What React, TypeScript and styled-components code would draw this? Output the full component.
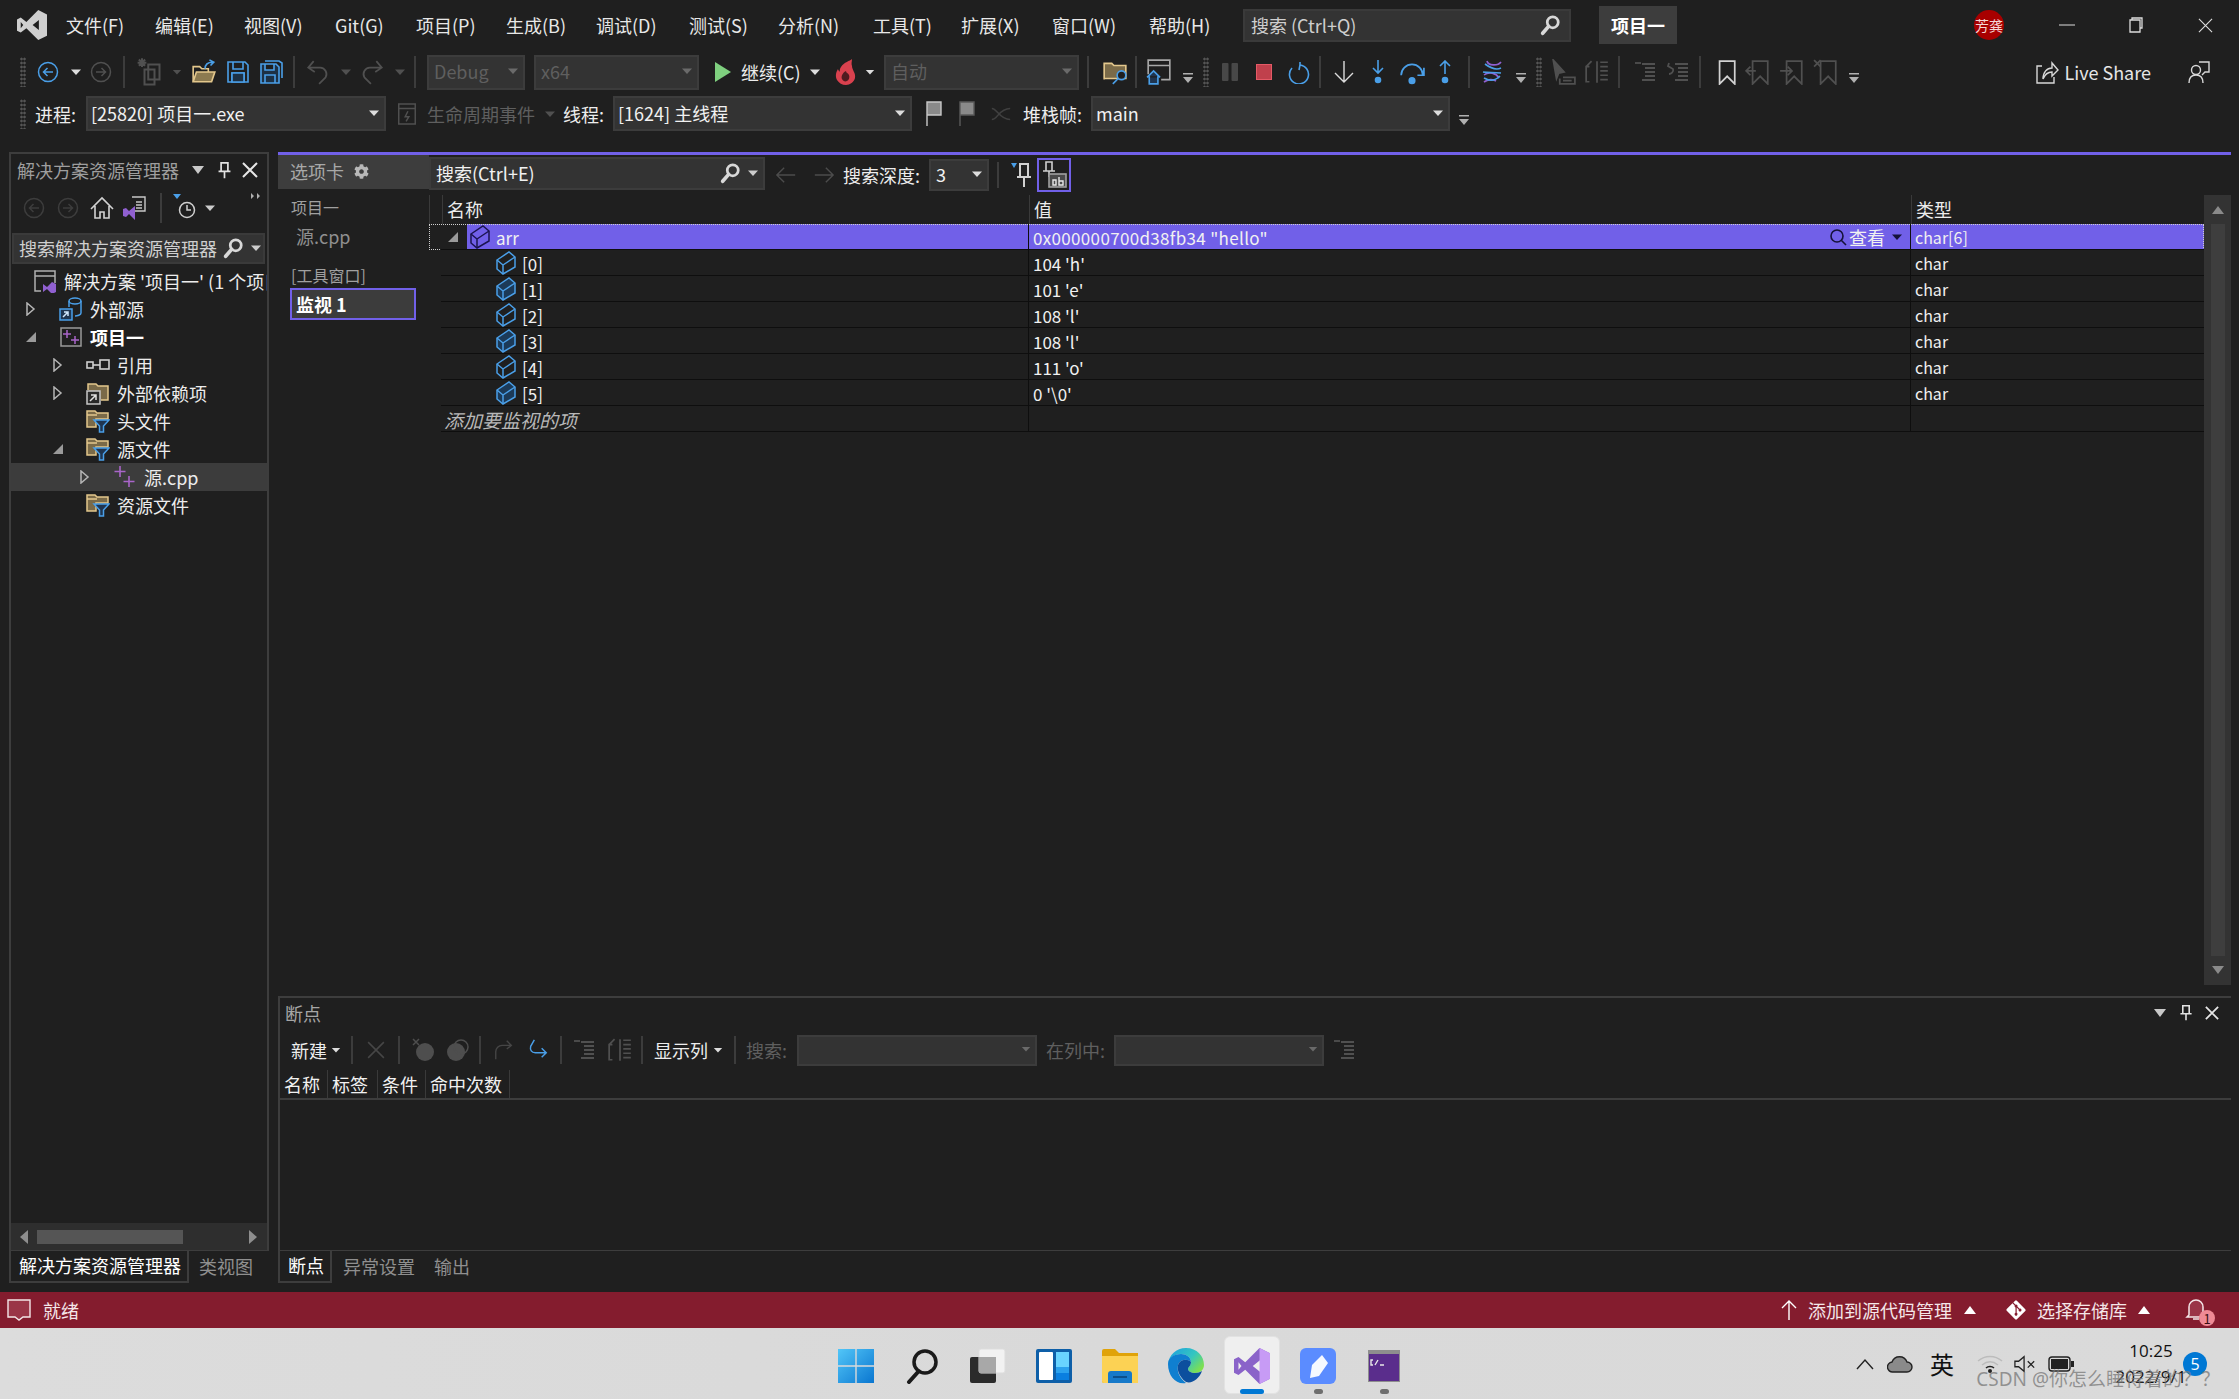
import React from "react";
import styled, { createGlobalStyle } from "styled-components";
import { FaCog, FaGitAlt } from "react-icons/fa";

const BLUE = "#4a9fe8";
const GRAY = "#505050";
const WHITE = "#dcdcdc";
const TAN = "#e3c78c";
const PURPLE = "#7160e8";

const Global = createGlobalStyle`
  html, body { margin: 0; padding: 0; background: #1f1f1f; }
  * { box-sizing: border-box; }
  body { font-family: "Noto Sans CJK SC", "Noto Sans", sans-serif; font-size: 18px; line-height: 1; color: #f1f1f1; }
`;

const Page = styled.div`
  width: 2239px;
  height: 1399px;
  overflow: hidden;
  display: flex;
  flex-direction: column;
  background: #1f1f1f;
`;

/* title bar */
const TitleBar = styled.div`
  height: 50px;
  display: flex;
  align-items: center;
  padding: 0 0 0 17px;
  flex: none;
`;
const MenuRow = styled.div`
  display: flex;
  margin-left: 19px;
`;
const MenuItem = styled.span<{ $w: number }>`
  width: ${(p) => p.$w}px;
  font-size: 18px;
  white-space: nowrap;
  color: #e8e8e8;
`;
const TitleSearch = styled.div`
  width: 328px;
  height: 33px;
  margin-left: 17px;
  background: #333333;
  border: 2px solid #3a3a3a;
  display: flex;
  align-items: center;
  justify-content: space-between;
  padding: 0 8px 0 6px;
  color: #cfcfcf;
`;
const ProjectName = styled.div`
  width: 78px;
  height: 38px;
  margin-left: 28px;
  background: #3d3d3d;
  font-weight: 700;
  color: #fff;
  display: flex;
  align-items: center;
  justify-content: center;
`;
const Avatar = styled.div`
  width: 30px;
  height: 30px;
  margin-left: 297px;
  margin-right: 31px;
  border-radius: 50%;
  background: #a80000;
  color: #f5d5d5;
  font-size: 14px;
  display: flex;
  align-items: center;
  justify-content: center;
  white-space: nowrap;
`;
const WinBtn = styled.div<{ $w: number }>`
  width: ${(p) => p.$w}px;
  display: flex;
  justify-content: center;
  align-items: center;
`;

/* toolbars */
const Toolbar = styled.div<{ $h: number; $pl?: number }>`
  height: ${(p) => p.$h}px;
  display: flex;
  align-items: center;
  padding-left: ${(p) => p.$pl ?? 16}px;
  flex: none;
`;
const BreakTools = styled(Toolbar)`
  margin-bottom: 2px;
`;
const Cell = styled.div<{ $w: number; $c?: string; $pl?: number }>`
  width: ${(p) => p.$w}px;
  height: 100%;
  flex: none;
  padding-left: ${(p) => p.$pl ?? 0}px;
  display: flex;
  align-items: center;
  justify-content: center;
  white-space: nowrap;
  color: ${(p) => p.$c ?? "#ededed"};
`;
const Sep = styled.div<{ $h?: number }>`
  width: 2px;
  height: ${(p) => p.$h ?? 32}px;
  background: #3c3c3c;
`;
const Gripper = styled.div`
  width: 6px;
  height: 30px;
  background-image: radial-gradient(#555 1px, transparent 1.2px);
  background-size: 3px 4px;
`;
const Combo = styled.div<{ $w: number; $h?: number; $dim?: boolean; $ml?: number; $pl?: number }>`
  width: ${(p) => p.$w}px;
  height: ${(p) => p.$h ?? 35}px;
  margin-left: ${(p) => p.$ml ?? 0}px;
  flex: none;
  background: #333333;
  border: 2px solid #3c3c3c;
  display: flex;
  align-items: center;
  justify-content: space-between;
  padding: 0 4px 2px ${(p) => p.$pl ?? 5}px;
  color: ${(p) => (p.$dim ? "#5f5f5f" : "#f1f1f1")};
  white-space: nowrap;
`;
const WatchSearch = styled(Combo)`
  margin-top: -3px;
`;
const SearchEnd = styled.div`
  display: flex;
  align-items: center;
  gap: 6px;
`;
const Label = styled.span<{ $w: number; $dim?: boolean; $ml?: number }>`
  width: ${(p) => p.$w}px;
  margin-left: ${(p) => p.$ml ?? 0}px;
  flex: none;
  white-space: nowrap;
  color: ${(p) => (p.$dim ? "#5f5f5f" : "#ededed")};
`;
const LiveShare = styled.div`
  margin-left: auto;
  display: flex;
  align-items: center;
  gap: 5px;
  color: #e6e6e6;
  padding-right: 28px;
`;
const LiveText = styled.span`
  font-size: 18px;
  margin-right: 31px;
`;
const OverflowMark = styled.svg`
  margin-top: 12px;
`;

/* workspace */
const Workspace = styled.div`
  flex: 1;
  min-height: 0;
  display: flex;
  gap: 9px;
  padding: 19px 8px 9px 9px;
`;
const LeftColumn = styled.div`
  width: 260px;
  flex: none;
  display: flex;
  flex-direction: column;
`;
const ToolPanel = styled.div`
  flex: 1;
  min-height: 0;
  border: 2px solid #3d3d3d;
  border-bottom-width: 1px;
  display: flex;
  flex-direction: column;
`;
const PanelTitle = styled.div`
  height: 32px;
  flex: none;
  display: flex;
  align-items: center;
  padding-left: 6px;
  color: #9e9e9e;
`;
const PanelTitleText = styled.span`
  width: 170px;
  white-space: nowrap;
`;
const PanelTool = styled.div`
  height: 44px;
  margin-bottom: 3px;
  flex: none;
  display: flex;
  align-items: center;
  padding-left: 6px;
`;
const MoreMark = styled.svg`
  margin-left: auto;
  margin-right: 6px;
  align-self: flex-start;
  margin-top: 6px;
`;
const PanelSearch = styled.div`
  height: 31px;
  flex: none;
  margin: 0 2px 0 1px;
  background: #333333;
  border: 2px solid #3a3a3a;
  display: flex;
  align-items: center;
  padding: 0 0 2px 5px;
  color: #cfcfcf;
  white-space: nowrap;
`;
const SearchHint = styled.span`
  width: 203px;
`;
const SearchDrop = styled.span`
  margin-left: 6px;
  display: flex;
`;
const Tree = styled.div`
  margin-top: 3px;
  flex: 1;
  min-height: 0;
  overflow: hidden;
`;
const TreeRow = styled.div<{ $pad: number; $sel?: boolean }>`
  height: 28px;
  display: flex;
  align-items: center;
  padding-left: ${(p) => p.$pad}px;
  background: ${(p) => (p.$sel ? "#3c3c3c" : "transparent")};
  white-space: nowrap;
  overflow: hidden;
`;
const Expander = styled.div`
  width: 22px;
  flex: none;
  display: flex;
  justify-content: center;
`;
const TreeIcon = styled.div`
  width: 28px;
  flex: none;
  margin-left: 15px;
  margin-right: 5px;
  display: flex;
  justify-content: center;
`;
const TreeText = styled.span<{ $bold?: boolean }>`
  font-weight: ${(p) => (p.$bold ? 700 : 400)};
  color: ${(p) => (p.$bold ? "#fff" : "#ececec")};
`;
const HScroll = styled.div`
  height: 27px;
  flex: none;
  background: #2e2e2e;
  display: flex;
  align-items: center;
  padding: 0 10px 0 9px;
  justify-content: space-between;
`;
const HThumb = styled.div`
  width: 146px;
  height: 14px;
  background: #555;
  margin-left: 9px;
  margin-right: auto;
`;
const TabStrip = styled.div`
  height: 32px;
  flex: none;
  display: flex;
`;
const BottomTab = styled.div<{ $w: number; $on?: boolean; $pl?: number }>`
  width: ${(p) => p.$w}px;
  flex: none;
  padding-left: ${(p) => p.$pl ?? 10}px;
  padding-bottom: 3px;
  display: flex;
  align-items: center;
  white-space: nowrap;
  color: ${(p) => (p.$on ? "#fff" : "#8f8f8f")};
  border: ${(p) => (p.$on ? "2px solid #3d3d3d" : "none")};
  border-top: none;
`;

const RightColumn = styled.div`
  flex: 1;
  min-width: 0;
  display: flex;
  flex-direction: column;
`;
const DocArea = styled.div`
  height: 833px;
  flex: none;
  border-top: 3px solid ${PURPLE};
  display: flex;
  margin-bottom: 11px;
`;
const TabWell = styled.div`
  width: 151px;
  flex: none;
  display: flex;
  flex-direction: column;
`;
const WellHeader = styled.div`
  height: 34px;
  background: #3d3d3d;
  display: flex;
  align-items: center;
  gap: 10px;
  padding: 0 0 2px 12px;
  color: #a8a8a8;
`;
const WellGroup = styled.div<{ $mt: number }>`
  margin: ${(p) => p.$mt}px 0 0 13px;
  font-size: 16px;
  color: #a0a0a0;
`;
const WellFile = styled.div`
  margin: 12px 0 0 18px;
  color: #8f8f8f;
  font-size: 18px;
`;
const WellActive = styled.div`
  width: 126px;
  height: 32px;
  margin: 5px 0 0 12px;
  border: 2px solid ${PURPLE};
  background: #3c3c3c;
  font-weight: 700;
  color: #fff;
  display: flex;
  align-items: center;
  padding-left: 4px;
`;
const WatchPane = styled.div`
  flex: 1;
  min-width: 0;
  display: flex;
  flex-direction: column;
`;
const WatchBody = styled.div`
  flex: 1;
  min-height: 0;
  display: flex;
`;
const Grid = styled.div`
  flex: 1;
  min-width: 0;
`;
const Head = styled.div`
  height: 29px;
  display: grid;
  grid-template-columns: 12px 587px 882px 1fr;
  border-left: 1px solid #3a3a3a;
`;
const HeadCell = styled.div`
  border-left: 1px solid #3a3a3a;
  padding: 0 0 2px 4px;
  display: flex;
  align-items: center;
  color: #ececec;
`;
const Row = styled.div<{ $sel?: boolean }>`
  height: 26px;
  display: grid;
  grid-template-columns: 38px 561px 882px 1fr;
  position: relative;
  outline: ${(p) => (p.$sel ? "1px dotted #cfcfcf" : "none")};
  outline-offset: -1px;
  &::after {
    content: "";
    position: absolute;
    left: 12px;
    right: 0;
    bottom: 0;
    height: 1px;
    background: #0e0e0e;
  }
`;
const Gutter = styled.div`
  display: flex;
  align-items: center;
  justify-content: center;
  padding-left: 10px;
`;
const NameCell = styled.div<{ $sel?: boolean; $depth: number }>`
  padding-left: ${(p) => p.$depth * 26 + 3}px;
  display: flex;
  align-items: center;
  gap: 6px;
  background: ${(p) => (p.$sel ? PURPLE : "transparent")};
  font-size: 17px;
`;
const ValueCell = styled.div<{ $sel?: boolean }>`
  border-left: 1px solid #0e0e0e;
  padding: 0 4px;
  display: flex;
  align-items: center;
  justify-content: space-between;
  background: ${(p) => (p.$sel ? PURPLE : "transparent")};
  font-size: 17px;
  white-space: pre;
`;
const TypeCell = styled(ValueCell)`
  font-size: 16px;
`;
const HexText = styled.span`
  letter-spacing: 0.33px;
`;
const AddText = styled.span`
  position: relative;
  left: -26px;
  font-style: italic;
  color: #b8b8b8;
  font-size: 19px;
`;
const ViewBtn = styled.span`
  display: flex;
  align-items: center;
  gap: 2px;
  font-size: 18px;
  margin-right: -1px;
`;
const VScroll = styled.div`
  width: 27px;
  flex: none;
  background: #333333;
  display: flex;
  flex-direction: column;
  align-items: center;
  padding: 10px 0;
  gap: 9px;
`;
const VThumb = styled.div`
  flex: 1;
  width: 14px;
  background: #3e3e3e;
`;
const BreakPanel = styled.div`
  flex: 1;
  min-height: 0;
  border: 2px solid #3d3d3d;
  border-bottom-width: 1px;
  border-right: none;
  display: flex;
  flex-direction: column;
`;
const BreakTitle = styled.div`
  height: 34px;
  flex: none;
  display: flex;
  align-items: center;
  justify-content: space-between;
  padding: 0 12px 4px 5px;
  color: #a6a6a6;
`;
const BreakButtons = styled.div`
  display: flex;
  align-items: center;
  gap: 11px;
`;
const BreakHead = styled.div`
  height: 30px;
  flex: none;
  display: flex;
  border-bottom: 2px solid #3d3d3d;
`;
const BreakCol = styled.div<{ $w: number }>`
  width: ${(p) => p.$w}px;
  padding-left: 4px;
  display: flex;
  align-items: center;
  border-right: 1px solid #3a3a3a;
  white-space: nowrap;
  color: #f1f1f1;
`;

/* status bar and taskbar */
const StatusBar = styled.div`
  height: 36px;
  flex: none;
  background: #841c2e;
  display: flex;
  align-items: center;
  padding-left: 7px;
  color: #f4e6e8;
`;
const StatusRight = styled.div`
  margin-left: auto;
  display: flex;
  align-items: center;
  padding-right: 29px;
`;
const StatusItem = styled.div<{ $gap: number; $mr: number }>`
  display: flex;
  align-items: center;
  gap: ${(p) => p.$gap}px;
  margin-right: ${(p) => p.$mr}px;
`;
const StatusLabel = styled.span`
  margin-left: 12px;
`;
const BellBox = styled.div`
  position: relative;
  width: 26px;
  height: 26px;
`;
const BellBadge = styled.span`
  position: absolute;
  right: -5px;
  bottom: -3px;
  width: 16px;
  height: 16px;
  border-radius: 50%;
  background: #ef8a95;
  color: #3a1016;
  font-size: 13px;
  display: flex;
  align-items: center;
  justify-content: center;
`;
const Taskbar = styled.div`
  height: 71px;
  flex: none;
  background: linear-gradient(90deg, #dcdcdc, #d9d9d9 50%, #dadada);
  display: grid;
  grid-template-columns: 1fr auto 1fr;
  position: relative;
  color: #111;
`;
const TaskIcons = styled.div`
  grid-column: 2;
  display: flex;
`;
const TaskCell = styled.div<{ $on?: boolean }>`
  position: relative;
  width: 66px;
  padding-top: 5px;
  display: flex;
  align-items: center;
  justify-content: center;
  &::before {
    content: "";
    display: ${(p) => (p.$on ? "block" : "none")};
    position: absolute;
    left: 5px;
    right: 5px;
    top: 8px;
    bottom: 5px;
    background: #efefef;
    border: 1px solid #e2e2e2;
    border-radius: 6px;
  }
  & > svg { position: relative; }
`;
const RunDot = styled.span<{ $active?: boolean }>`
  position: absolute;
  left: 50%;
  bottom: 5px;
  width: ${(p) => (p.$active ? 24 : 9)}px;
  height: 5px;
  margin-left: ${(p) => (p.$active ? -12 : -4)}px;
  border-radius: 3px;
  background: ${(p) => (p.$active ? "#0078d4" : "#6e6e6e")};
`;
const Tray = styled.div`
  grid-column: 3;
  display: flex;
  align-items: center;
  justify-content: flex-end;
  padding-right: 32px;
`;
const TrayCell = styled.div<{ $w: number }>`
  width: ${(p) => p.$w}px;
  display: flex;
  justify-content: center;
  font-size: 24px;
`;
const Clock = styled.div`
  width: 64px;
  display: flex;
  flex-direction: column;
  align-items: center;
  gap: 9px;
  font-family: "Open Sans", sans-serif;
  font-size: 17px;
  white-space: nowrap;
  margin-left: 33px;
`;
const Badge = styled.div`
  width: 24px;
  height: 24px;
  border-radius: 50%;
  background: #0078d4;
  color: #fff;
  font-size: 16px;
  display: flex;
  align-items: center;
  justify-content: center;
  font-family: "Open Sans", sans-serif;
`;
const Watermark = styled.div`
  position: absolute;
  right: 19px;
  top: 42px;
  font-size: 19px;
  font-family: "Noto Sans", "Noto Sans CJK SC", sans-serif;
  color: rgba(120, 120, 120, 0.75);
  white-space: nowrap;
`;

/* drawings */
type IcProps = { s?: number; c?: string; children?: React.ReactNode; w?: number };
const Ic = ({ s = 24, c = GRAY, w = 1.6, children }: IcProps) => (
  <svg width={s} height={s} viewBox="0 0 24 24" fill="none" stroke={c} strokeWidth={w}>
    {children}
  </svg>
);
const Caret = ({ c = "#bdbdbd", s = 12 }: { c?: string; s?: number }) => (
  <svg width={s} height={s} viewBox="0 0 12 12">
    <path d="M1 3.500h10L6 9z" fill={c} />
  </svg>
);
const Overflow = () => (
  <OverflowMark width="12" height="14" viewBox="0 0 12 14">
    <path d="M1 2h10v1.600H1zM1 6h10L6 12z" fill="#b0b0b0" />
  </OverflowMark>
);
const Magnifier = ({ s = 22, c = "#d8d8d8" }: { s?: number; c?: string }) => (
  <svg width={s} height={s} viewBox="0 0 24 24" fill="none" stroke={c}>
    <circle cx="15" cy="9" r="6" strokeWidth="3" />
    <path d="M10.500 13.500L4 21" strokeWidth="4" strokeLinecap="round" />
  </svg>
);
const VsMark = ({ s = 24, c, c2 }: { s?: number; c: string; c2?: string }) => (
  <svg width={s} height={s} viewBox="0 0 24 24">
    <path
      fillRule="evenodd"
      fill={c}
      d="M17 0L7.500 9.500 3 6 0 7.500v9L3 18l4.500-3.500L17 24l7-3.500v-17zM17.500 8v8L12.500 12zM3 9.500L5 12l-2 2.500z"
    />
    {c2 && <path fill={c2} d="M17 0l7 3.500v17L17 24z" />}
  </svg>
);
const CircleArrow = ({ c, flip }: { c: string; flip?: boolean }) => (
  <Ic c={c} w={1.5}>
    <circle cx="12" cy="12" r="9.500" />
    <path d={flip ? "M7 12h9M12.500 8l4 4-4 4" : "M17 12H8M11.500 8l-4 4 4 4"} />
  </Ic>
);
const NewProject = () => (
  <Ic c={GRAY} s={30}>
    <path d="M4 1v7M.5 4.500h7M1.500 2l5 5M6.500 2l-5 5" />
    <path d="M9 6h9v12H9zM6 10h8v12H6z" />
  </Ic>
);
const OpenFolder = () => (
  <svg width="26" height="26" viewBox="0 0 24 24" fill="none" strokeWidth="1.5">
    <path d="M2 21V7h6l2 2h6v3" stroke={TAN} />
    <path d="M2 21l3-9h17l-3 9z" stroke={TAN} fill="#8c7a50" />
    <path d="M13 9c0-4 3-6 7-6M17 .8L21 3l-3 3" stroke={BLUE} />
  </svg>
);
const Save = () => (
  <Ic c={BLUE} s={24}>
    <path d="M2 2h17l3 3v17H2zM7 2v7h10V2M6 22v-9h12v9" />
    <path d="M6 13h12v9H6z" fill="#1d3145" />
  </Ic>
);
const SaveAll = () => (
  <Ic c={BLUE} s={24}>
    <path d="M6 1h14l3 2v15" />
    <path d="M2 4h15l3 3v16H2zM6 4v6h9V4M6 23v-8h10v8" fill="#1d3145" />
  </Ic>
);
const Undo = ({ flip }: { flip?: boolean }) => (
  <Ic c={GRAY} s={26}>
    <path
      d={
        flip
          ? "M16 2l5 6-6 4M21 8H10a6 6 0 0 0-5 9l6 6"
          : "M8 2L3 8l6 4M3 8h11a6 6 0 0 1 5 9l-6 6"
      }
    />
  </Ic>
);
const Play = () => (
  <svg width="18" height="20" viewBox="0 0 18 20">
    <path d="M1 0l16 10L1 20z" fill="#7fd07f" />
  </svg>
);
const Fire = () => (
  <svg width="22" height="26" viewBox="0 0 22 26">
    <path
      d="M17 0c-2 2-8 3-11 8C4 11 5 13 5 13c-1-1-2-2-2-3-2 3-3 7-1 11 2 3 5 5 9 5s8-3 9-7c1-5-3-8-3-12-1-2 0-5 0-7z"
      fill="#d9414e"
    />
    <path d="M11 12c-4 2-5 6-4 8s3 3 5 2 3-4 2-6-3-2-3-4z" fill="#4f1b20" />
  </svg>
);
const FolderSearch = () => (
  <svg width="26" height="26" viewBox="0 0 24 24" fill="none" strokeWidth="1.5">
    <path d="M2 19V4h7l2 2h11v12H2z" stroke={TAN} fill="#7a6a48" />
    <circle cx="18" cy="15" r="4" stroke={BLUE} fill="#1f1f1f" />
    <path d="M15 18l-5 5" stroke={BLUE} />
  </svg>
);
const WindowHome = () => (
  <svg width="26" height="26" viewBox="0 0 24 24" fill="none" strokeWidth="1.5">
    <path d="M2 14V1h20v18h-8M2 6h20" stroke="#a8a8a8" />
    <path d="M1 17l6-6 6 6M3 16v7h8v-7" stroke={BLUE} fill="#1f3550" />
  </svg>
);
const Pause = () => (
  <svg width="18" height="18" viewBox="0 0 18 18">
    <rect x="1" width="6.500" height="18" rx="1" fill="#484848" />
    <rect x="10.500" width="6.500" height="18" rx="1" fill="#484848" />
  </svg>
);
const Stop = () => (
  <svg width="16" height="16" viewBox="0 0 16 16">
    <rect x=".5" y=".5" width="15" height="15" fill="#c0404c" stroke="#e45a66" />
  </svg>
);
const Restart = () => (
  <Ic c={BLUE} s={24}>
    <path d="M14 3a9.500 9.500 0 1 1-8 3M14 3V0M14 3l-1 5" transform="translate(0 2)" />
  </Ic>
);
const StepDown = () => (
  <Ic c={WHITE} s={24} w={1.4}>
    <path d="M12 1v21M3 13l9 9 9-9" />
  </Ic>
);
const StepInto = () => (
  <Ic c={BLUE} s={24}>
    <path d="M12 0v13M7 8l5 5 5-5" />
    <circle cx="12" cy="20" r="2.500" fill={BLUE} />
  </Ic>
);
const StepOver = () => (
  <Ic c={BLUE} s={26}>
    <path d="M2 15a10 10 0 0 1 20 0M23 8v7h-6" />
    <circle cx="12" cy="20" r="2.500" fill={BLUE} />
  </Ic>
);
const StepOut = () => (
  <Ic c={BLUE} s={24}>
    <path d="M12 14V1M7 6l5-5 5 5" />
    <circle cx="12" cy="20" r="2.500" fill={BLUE} />
  </Ic>
);
const Threads = () => (
  <svg width="24" height="24" viewBox="0 0 24 24" fill="none" strokeWidth="1.6">
    <path d="M7 1c1 5 11 5 14 1M4 15c5-4 12-2 15 3M4 22c4-3 9-3 12-1" stroke="#9060d0" />
    <path d="M21 8C15 11 9 7 5 4M3 12c5 1 11 0 18 1M4 18c5 3 11 3 16-2" stroke={BLUE} />
  </svg>
);
const CursorBox = () => (
  <Ic c={GRAY} s={26}>
    <path d="M3 1l10 11-5 1-2 5z" fill={GRAY} />
    <path d="M9 18v5h14v-6H12M12 20h8" />
  </Ic>
);
const Columns = () => (
  <Ic c={GRAY} s={26}>
    <path d="M5 7H2v14h3M2 7l5-5M12 2v20M15 3h7M15 7h7M15 11h7M15 15h7M15 19h7" />
  </Ic>
);
const Lines = ({ back }: { back?: boolean }) => (
  <Ic c={GRAY} s={24} w={1.8}>
    <path d="M9 4h13M12 8h10M12 12h10M12 16h10M9 20h13" />
    {back ? <path d="M3 3l-1 3 5 3c1 3-2 5-4 5" /> : <path d="M2 3h6" />}
  </Ic>
);
const Mark = ({ c = GRAY, kind }: { c?: string; kind?: "prev" | "next" | "del" }) => (
  <Ic c={c} s={26}>
    <path d="M7 2h14v21l-7-7-7 7z" />
    {kind === "prev" && <path d="M10 11H1M5 7l-4 4 4 4" />}
    {kind === "next" && <path d="M1 11h10M8 7l4 4-4 4" />}
    {kind === "del" && <path d="M1 1l6 6M7 1L1 7" />}
  </Ic>
);
const Share = () => (
  <Ic c="#d8d8d8" s={24} w={1.4}>
    <path d="M7 6H2v17h17v-6" />
    <path d="M8 19c0-7 4-11 9-11V3l6 7-6 6v-4c-4 0-7 2-9 7z" />
  </Ic>
);
const Person = () => (
  <Ic c="#d8d8d8" s={24} w={1.4}>
    <circle cx="9" cy="10" r="4.500" />
    <path d="M2 23c0-6 3-8 7-8s7 2 7 8M12 2h10v10h-4l-3 3" />
  </Ic>
);
const Flag = ({ c = "#c8c8c8" }: { c?: string }) => (
  <svg width="20" height="26" viewBox="0 0 20 26" fill="none" stroke={c} strokeWidth="1.4">
    <path d="M3 25V1h14v13H3" fill="#8a8a8a" />
  </svg>
);
const TreeArrow = ({ open }: { open?: boolean }) =>
  open ? (
    <svg width="12" height="12" viewBox="0 0 12 12">
      <path d="M11 1v10H1z" fill="#9a9a9a" />
    </svg>
  ) : (
    <svg width="10" height="14" viewBox="0 0 10 14" fill="none" stroke="#b6b6b6" strokeWidth="1.5">
      <path d="M1 1l7 6-7 6z" />
    </svg>
  );
const FilterFolder = () => (
  <svg width="24" height="24" viewBox="0 0 24 24" fill="none" strokeWidth="1.5">
    <path d="M1 18V2h8l2 2h11v6H10v8z" fill="#7a6a48" stroke={TAN} />
    <path d="M1 6h10" stroke={TAN} />
    <path d="M8 11h15l-5.500 6v6h-4v-6z" stroke={BLUE} fill="#1f3550" />
  </svg>
);
const CppPlus = ({ s = 24 }: { s?: number }) => (
  <svg width={s} height={s} viewBox="0 0 24 24" stroke="#a965c9" strokeWidth="1.6">
    <path d="M7 1v11M1.500 6.500h11M16 11v11M10.500 16.500h11" />
  </svg>
);
const Cube = ({ c = BLUE, fill = "#1c3a58", even }: { c?: string; fill?: string; even?: boolean }) => (
  <svg width="20" height="24" viewBox="0 0 20 24" fill="none" stroke={c} strokeWidth="1.5">
    <path d="M1 9L13 1l6 5v10L7 23l-6-5z" fill={even ? fill : "none"} />
    <path d="M1 9l6 5v9M7 14l12-8" />
  </svg>
);
const Tri = ({ up, c = "#8a8a8a" }: { up?: boolean; c?: string }) => (
  <svg width="14" height="10" viewBox="0 0 14 10">
    <path d={up ? "M7 1l6 8H1z" : "M1 1h12L7 9z"} fill={c} />
  </svg>
);
const SideTri = ({ left }: { left?: boolean }) => (
  <svg width="8" height="14" viewBox="0 0 8 14">
    <path d={left ? "M8 0v14L0 7z" : "M0 0v14l8-7z"} fill="#8e8e8e" />
  </svg>
);
const Pin = ({ c = "#e2e2e2", s = 20 }: { c?: string; s?: number }) => (
  <svg width={s} height={s} viewBox="0 0 20 20" fill="none" stroke={c} strokeWidth="2">
    <path d="M6 1h8v10H6zM3 11h14M10 11v8" />
  </svg>
);
const Cross = ({ s = 16, c = "#e6e6e6", w = 2 }: { s?: number; c?: string; w?: number }) => (
  <svg width={s} height={s} viewBox="0 0 16 16" stroke={c} strokeWidth={w}>
    <path d="M1 1l14 14M15 1L1 15" />
  </svg>
);

function MenuBar() {
  const items: [string, number][] = [
    ["文件(F)", 89], ["编辑(E)", 89], ["视图(V)", 91], ["Git(G)", 81], ["项目(P)", 90],
    ["生成(B)", 90], ["调试(D)", 93], ["测试(S)", 89], ["分析(N)", 95], ["工具(T)", 88],
    ["扩展(X)", 91], ["窗口(W)", 97], ["帮助(H)", 77],
  ];
  return (
    <TitleBar>
      <VsMark s={30} c="#cfcfcf" />
      <MenuRow>
        {items.map(([t, w]) => (
          <MenuItem key={t} $w={w}>{t}</MenuItem>
        ))}
      </MenuRow>
      <TitleSearch>
        搜索 (Ctrl+Q)
        <Magnifier />
      </TitleSearch>
      <ProjectName>项目一</ProjectName>
      <Avatar>芳龚</Avatar>
      <WinBtn $w={63}>
        <svg width="16" height="2"><path d="M0 1h16" stroke="#ddd" /></svg>
      </WinBtn>
      <WinBtn $w={76}>
        <svg width="16" height="16" viewBox="0 0 16 16" fill="none" stroke="#ddd" strokeWidth="1.3">
          <path d="M4 3V1h10v10h-2M2 3h10v12H2z" />
        </svg>
      </WinBtn>
      <WinBtn $w={62}>
        <Cross s={15} c="#ddd" w={1.2} />
      </WinBtn>
    </TitleBar>
  );
}

function MainToolbar() {
  return (
    <Toolbar $h={44}>
      <Cell $w={14}><Gripper /></Cell>
      <Cell $w={36}><CircleArrow c={BLUE} /></Cell>
      <Cell $w={20}><Caret c="#ddd" /></Cell>
      <Cell $w={30}><CircleArrow c={GRAY} flip /></Cell>
      <Cell $w={16}><Sep /></Cell>
      <Cell $w={40}><NewProject /></Cell>
      <Cell $w={10}><Caret c={GRAY} /></Cell>
      <Cell $w={44}><OpenFolder /></Cell>
      <Cell $w={24}><Save /></Cell>
      <Cell $w={42}><SaveAll /></Cell>
      <Cell $w={4}><Sep /></Cell>
      <Cell $w={44}><Undo /></Cell>
      <Cell $w={12}><Caret c={GRAY} /></Cell>
      <Cell $w={40}><Undo flip /></Cell>
      <Cell $w={16}><Caret c={GRAY} /></Cell>
      <Cell $w={14}><Sep /></Cell>
      <Combo $w={98} $dim $ml={5}>Debug<Caret c="#6a6a6a" /></Combo>
      <Combo $w={165} $dim $ml={9}>x64<Caret c="#6a6a6a" /></Combo>
      <Cell $w={42} $pl={6}><Play /></Cell>
      <Label $w={62}>继续(C)</Label>
      <Cell $w={24}><Caret c="#ddd" /></Cell>
      <Cell $w={38}><Fire /></Cell>
      <Cell $w={10}><Caret c="#ddd" /></Cell>
      <Combo $w={195} $dim $ml={9}>自动<Caret c="#6a6a6a" /></Combo>
      <Cell $w={18}><Sep /></Cell>
      <Cell $w={36}><FolderSearch /></Cell>
      <Cell $w={6}><Sep /></Cell>
      <Cell $w={40}><WindowHome /></Cell>
      <Cell $w={18}><Overflow /></Cell>
      <Cell $w={18}><Gripper /></Cell>
      <Cell $w={30}><Pause /></Cell>
      <Cell $w={38}><Stop /></Cell>
      <Cell $w={30}><Restart /></Cell>
      <Cell $w={14}><Sep /></Cell>
      <Cell $w={34}><StepDown /></Cell>
      <Cell $w={34}><StepInto /></Cell>
      <Cell $w={34}><StepOver /></Cell>
      <Cell $w={32}><StepOut /></Cell>
      <Cell $w={16}><Sep /></Cell>
      <Cell $w={30}><Threads /></Cell>
      <Cell $w={28}><Overflow /></Cell>
      <Cell $w={8}><Gripper /></Cell>
      <Cell $w={40}><CursorBox /></Cell>
      <Cell $w={28}><Columns /></Cell>
      <Cell $w={16}><Sep /></Cell>
      <Cell $w={36}><Lines /></Cell>
      <Cell $w={30}><Lines back /></Cell>
      <Cell $w={14}><Sep /></Cell>
      <Cell $w={36}><Mark c="#d2d2d2" /></Cell>
      <Cell $w={30}><Mark kind="prev" /></Cell>
      <Cell $w={38}><Mark kind="next" /></Cell>
      <Cell $w={30}><Mark kind="del" /></Cell>
      <Cell $w={26}><Overflow /></Cell>
      <LiveShare>
        <Share />
        <LiveText>Live Share</LiveText>
        <Person />
      </LiveShare>
    </Toolbar>
  );
}

function DebugToolbar() {
  return (
    <Toolbar $h={39}>
      <Cell $w={14}><Gripper /></Cell>
      <Label $w={51} $ml={5}>进程:</Label>
      <Combo $w={300} $pl={3}>[25820] 项目一.exe<Caret c="#ddd" /></Combo>
      <Cell $w={41} $c={GRAY}>
        <Ic c={GRAY} s={22}>
          <path d="M3 1h18v22H3zM3 6h18M13 9l-3 6h4l-3 5" />
        </Ic>
      </Cell>
      <Label $w={109} $dim>生命周期事件</Label>
      <Cell $w={27}><Caret c={GRAY} /></Cell>
      <Label $w={50}>线程:</Label>
      <Combo $w={299} $pl={3}>[1624] 主线程<Caret c="#ddd" /></Combo>
      <Cell $w={43}><Flag /></Cell>
      <Cell $w={24}><Flag c="#5a5a5a" /></Cell>
      <Cell $w={44}>
        <Ic c="#404040" s={22}><path d="M2 6c6 0 8 12 20 12M2 18C8 18 10 6 22 6" /></Ic>
      </Cell>
      <Label $w={68}>堆栈帧:</Label>
      <Combo $w={359} $pl={3}>main<Caret c="#ddd" /></Combo>
      <Cell $w={28}><Overflow /></Cell>
    </Toolbar>
  );
}

function SolutionExplorer() {
  return (
    <LeftColumn>
      <ToolPanel>
        <PanelTitle>
          <PanelTitleText>解决方案资源管理器</PanelTitleText>
          <Cell $w={22}><Tri c="#c8c8c8" /></Cell>
          <Cell $w={30}><Pin s={17} /></Cell>
          <Cell $w={22}><Cross /></Cell>
        </PanelTitle>
        <PanelTool>
          <Cell $w={34}><CircleArrow c="#3d3d3d" /></Cell>
          <Cell $w={34}><CircleArrow c="#3d3d3d" flip /></Cell>
          <Cell $w={34}>
            <Ic c="#d2d2d2" s={24}><path d="M1 13L12 2l11 11M5 10v12h5v-6h4v6h5V10" /></Ic>
          </Cell>
          <Cell $w={30}>
            <svg width="26" height="26" viewBox="0 0 26 26" fill="none">
              <path d="M11 2h13v14H11" stroke="#c8c8c8" strokeWidth="1.4" />
              <path d="M15 7h6M15 10h6M15 13h6" stroke="#c8c8c8" strokeWidth="1.4" />
              <path d="M14 11v14L8 19l-3 3-3-1v-7l3-1 3 3z" fill="#9060d0" />
            </svg>
          </Cell>
          <Cell $w={24}><Sep $h={30} /></Cell>
          <Cell $w={26}>
            <svg width="26" height="28" viewBox="0 0 26 28" fill="none" stroke="#cfcfcf" strokeWidth="1.5">
              <path d="M0 0h8L4 5z" fill={BLUE} stroke="none" />
              <circle cx="14" cy="16" r="7.500" />
              <path d="M14 11v5h4" />
            </svg>
          </Cell>
          <Cell $w={22}><Caret c="#ccc" /></Cell>
          <MoreMark width="10" height="8" viewBox="0 0 10 8">
            <path d="M0 1l3 3-3 3zM6 1l3 3-3 3z" fill="#b0b0b0" />
          </MoreMark>
        </PanelTool>
        <PanelSearch>
          <SearchHint>搜索解决方案资源管理器</SearchHint>
          <Magnifier />
          <SearchDrop><Caret c="#ccc" /></SearchDrop>
        </PanelSearch>
        <Tree>
          <TreeRow $pad={5}>
            <TreeIcon>
              <svg width="24" height="24" viewBox="0 0 24 24" fill="none">
                <path d="M8 22H2V2h20v12M2 7h20" stroke="#b0b0b0" strokeWidth="1.5" />
                <path d="M10 15l4 3 5-5 4 2v8l-4 2-5-5-4 3z" fill="#9060d0" />
              </svg>
            </TreeIcon>
            <TreeText>解决方案 '项目一' (1 个项目，共 1 个)</TreeText>
          </TreeRow>
          <TreeRow $pad={9}>
            <Expander><TreeArrow /></Expander>
            <TreeIcon>
              <svg width="24" height="24" viewBox="0 0 24 24" fill="none" strokeWidth="1.5">
                <ellipse cx="16" cy="4" rx="6" ry="3" stroke={BLUE} />
                <path d="M10 4v6M22 4v12c0 2-4 3-6 3" stroke={BLUE} />
                <rect x="1" y="12" width="12" height="11" stroke={BLUE} fill="#1f3550" />
                <path d="M4 20l5-5M5 15h4v4" stroke="#cfe6fb" />
              </svg>
            </TreeIcon>
            <TreeText>外部源</TreeText>
          </TreeRow>
          <TreeRow $pad={9}>
            <Expander><TreeArrow open /></Expander>
            <TreeIcon>
              <svg width="22" height="20" viewBox="0 0 22 20" fill="none" stroke="#9a9a9a" strokeWidth="1.5">
                <rect x="1" y="1" width="20" height="18" />
                <path d="M7 3v8M3 7h8M15 9v8M11 13h8" stroke="#a965c9" />
              </svg>
            </TreeIcon>
            <TreeText $bold>项目一</TreeText>
          </TreeRow>
          <TreeRow $pad={36}>
            <Expander><TreeArrow /></Expander>
            <TreeIcon>
              <svg width="24" height="12" viewBox="0 0 24 12" fill="none" stroke="#cfcfcf" strokeWidth="1.6">
                <rect x="1" y="3" width="6" height="6" />
                <rect x="14" y="1" width="9" height="9" />
                <path d="M7 6h7" />
              </svg>
            </TreeIcon>
            <TreeText>引用</TreeText>
          </TreeRow>
          <TreeRow $pad={36}>
            <Expander><TreeArrow /></Expander>
            <TreeIcon>
              <svg width="24" height="24" viewBox="0 0 24 24" fill="none" strokeWidth="1.5">
                <path d="M2 9V3h8l2 2h10v14h-7" stroke={TAN} fill="#7a6a48" />
                <rect x="1" y="10" width="13" height="13" stroke="#c8c8c8" fill="#2a2a2a" />
                <path d="M4 20l6-6M5 14h5v5" stroke="#e0e0e0" />
              </svg>
            </TreeIcon>
            <TreeText>外部依赖项</TreeText>
          </TreeRow>
          <TreeRow $pad={36}>
            <Expander />
            <TreeIcon><FilterFolder /></TreeIcon>
            <TreeText>头文件</TreeText>
          </TreeRow>
          <TreeRow $pad={36}>
            <Expander><TreeArrow open /></Expander>
            <TreeIcon><FilterFolder /></TreeIcon>
            <TreeText>源文件</TreeText>
          </TreeRow>
          <TreeRow $pad={63} $sel>
            <Expander><TreeArrow /></Expander>
            <TreeIcon><CppPlus /></TreeIcon>
            <TreeText>源.cpp</TreeText>
          </TreeRow>
          <TreeRow $pad={36}>
            <Expander />
            <TreeIcon><FilterFolder /></TreeIcon>
            <TreeText>资源文件</TreeText>
          </TreeRow>
        </Tree>
        <HScroll>
          <SideTri left />
          <HThumb />
          <SideTri />
        </HScroll>
      </ToolPanel>
      <TabStrip>
        <BottomTab $w={180} $on $pl={8}>解决方案资源管理器</BottomTab>
        <BottomTab $w={80}>类视图</BottomTab>
      </TabStrip>
    </LeftColumn>
  );
}

const rows = [
  ["[0]", "104 'h'"],
  ["[1]", "101 'e'"],
  ["[2]", "108 'l'"],
  ["[3]", "108 'l'"],
  ["[4]", "111 'o'"],
  ["[5]", "0 '\\0'"],
];

const PinnedBox = styled.div`
  width: 34px;
  height: 34px;
  border: 2px solid ${PURPLE};
  display: flex;
  align-items: center;
  justify-content: center;
`;
const Pinned = () => (
  <PinnedBox>
    <svg width="26" height="28" viewBox="0 0 26 28" fill="none" stroke="#cfcfcf" strokeWidth="1.6">
      <path d="M5 1h6v9H5zM2 10h12M8 10v6" />
      <rect x="8" y="13" width="17" height="13" fill="#4a4a4a" stroke="#a0a0a0" />
      <path d="M12 19h3v5h-3zM18 16v8h4v-4h-4" stroke="#e8e8e8" strokeWidth="1.4" />
    </svg>
  </PinnedBox>
);

function WatchWindow() {
  return (
    <DocArea>
      <TabWell>
        <WellHeader>
          选项卡
          <FaCog size={15} color="#b8b8b8" />
        </WellHeader>
        <WellGroup $mt={10}>项目一</WellGroup>
        <WellFile>源.cpp</WellFile>
        <WellGroup $mt={22}>[工具窗口]</WellGroup>
        <WellActive>监视 1</WellActive>
      </TabWell>
      <WatchPane>
        <Toolbar $h={40} $pl={0}>
          <WatchSearch $w={336} $h={33}>
            搜索(Ctrl+E)
            <SearchEnd><Magnifier /><Caret c="#ccc" /></SearchEnd>
          </WatchSearch>
          <Cell $w={42}>
            <Ic c="#4c4c4c" s={22} w={1.5}><path d="M22 12H2M10 4l-8 8 8 8" /></Ic>
          </Cell>
          <Cell $w={34}>
            <Ic c="#4c4c4c" s={22} w={1.5}><path d="M2 12h20M14 4l8 8-8 8" /></Ic>
          </Cell>
          <Label $w={86} $ml={2}>搜索深度:</Label>
          <Combo $w={60} $h={32}>3<Caret c="#ddd" /></Combo>
          <Cell $w={18}><Sep $h={26} /></Cell>
          <Cell $w={30}>
            <svg width="22" height="26" viewBox="0 0 22 26" fill="none" stroke="#d0d0d0" strokeWidth="2">
              <path d="M0 1h6L3 6z" fill={BLUE} stroke="none" />
              <path d="M9 2h8v13H9zM6 15h14M13 15v10" />
            </svg>
          </Cell>
          <Cell $w={34}>
            <Pinned />
          </Cell>
        </Toolbar>
        <WatchBody>
          <Grid>
            <Head>
              <span />
              <HeadCell>名称</HeadCell>
              <HeadCell>值</HeadCell>
              <HeadCell>类型</HeadCell>
            </Head>
            <Row $sel>
              <Gutter><TreeArrow open /></Gutter>
              <NameCell $sel $depth={0}>
                <Cube c="#1b1450" />
                arr
              </NameCell>
              <ValueCell $sel>
                <HexText>0x000000700d38fb34 "hello"</HexText>
                <ViewBtn>
                  <svg width="18" height="18" viewBox="0 0 18 18" fill="none" stroke="#15123a" strokeWidth="1.6">
                    <circle cx="8" cy="8" r="6" />
                    <path d="M12 12l5 5" />
                  </svg>
                  查看
                  <Cell $w={20}><Caret c="#15123a" /></Cell>
                </ViewBtn>
              </ValueCell>
              <TypeCell $sel>char[6]</TypeCell>
            </Row>
            {rows.map(([name, value], i) => (
              <Row key={name}>
                <Gutter />
                <NameCell $depth={1}>
                  <Cube even={i % 2 === 1} />
                  {name}
                </NameCell>
                <ValueCell>{value}</ValueCell>
                <TypeCell>char</TypeCell>
              </Row>
            ))}
            <Row>
              <Gutter />
              <NameCell $depth={0}>
                <AddText>添加要监视的项</AddText>
              </NameCell>
              <ValueCell />
              <TypeCell />
            </Row>
          </Grid>
          <VScroll>
            <Tri up />
            <VThumb />
            <Tri />
          </VScroll>
        </WatchBody>
      </WatchPane>
    </DocArea>
  );
}

function Breakpoints() {
  return (
    <>
      <BreakPanel>
        <BreakTitle>
          断点
          <BreakButtons>
            <Tri c="#c8c8c8" />
            <Pin s={16} />
            <Cross s={14} />
          </BreakButtons>
        </BreakTitle>
        <BreakTools $h={36} $pl={11}>
          <Label $w={38}>新建</Label>
          <Cell $w={14}><Caret c="#ddd" s={10} /></Cell>
          <Cell $w={18}><Sep $h={28} /></Cell>
          <Cell $w={30}><Cross s={18} c="#464646" w={1.4} /></Cell>
          <Cell $w={16}><Sep $h={28} /></Cell>
          <Cell $w={33}>
            <svg width="24" height="24" viewBox="0 0 24 24">
              <circle cx="13" cy="14" r="9" fill="#4e4e4e" />
              <path d="M1 1l6 6M7 1L1 7" stroke="#4e4e4e" strokeWidth="1.5" />
            </svg>
          </Cell>
          <Cell $w={34}>
            <svg width="24" height="24" viewBox="0 0 24 24">
              <circle cx="11" cy="14" r="9" fill="#4e4e4e" />
              <circle cx="16" cy="9" r="7" fill="none" stroke="#4e4e4e" strokeWidth="1.5" />
            </svg>
          </Cell>
          <Cell $w={12}><Sep $h={28} /></Cell>
          <Cell $w={36}>
            <Ic c="#464646" s={22} w={1.5}><path d="M15 2l5 5-5 4M20 7H10a7 7 0 0 0-7 7v8" /></Ic>
          </Cell>
          <Cell $w={32}>
            <Ic c={BLUE} s={22} w={1.6}><path d="M8 1L4 8c-1 4 1 7 5 7h12M16 10l5 5-5 5" /></Ic>
          </Cell>
          <Cell $w={14}><Sep $h={28} /></Cell>
          <Cell $w={32}><Lines /></Cell>
          <Cell $w={40}><Columns /></Cell>
          <Cell $w={3}><Sep $h={28} /></Cell>
          <Label $w={55} $ml={11}>显示列</Label>
          <Cell $w={18}><Caret c="#ddd" s={10} /></Cell>
          <Cell $w={16}><Sep $h={28} /></Cell>
          <Label $w={42} $dim $ml={3}>搜索:</Label>
          <Combo $w={240} $h={31} $dim $ml={9}><span /><Caret c="#6a6a6a" s={10} /></Combo>
          <Label $w={60} $dim $ml={9}>在列中:</Label>
          <Combo $w={210} $h={31} $dim $ml={8}><span /><Caret c="#6a6a6a" s={10} /></Combo>
          <Cell $w={40}><Lines /></Cell>
        </BreakTools>
        <BreakHead>
          <BreakCol $w={48}>名称</BreakCol>
          <BreakCol $w={50}>标签</BreakCol>
          <BreakCol $w={48}>条件</BreakCol>
          <BreakCol $w={84}>命中次数</BreakCol>
        </BreakHead>
      </BreakPanel>
      <TabStrip>
        <BottomTab $w={54} $on $pl={8}>断点</BottomTab>
        <BottomTab $w={91} $pl={11}>异常设置</BottomTab>
        <BottomTab $w={70} $pl={11}>输出</BottomTab>
      </TabStrip>
    </>
  );
}

function Taskbars() {
  return (
    <>
      <StatusBar>
        <svg width="24" height="24" viewBox="0 0 24 24">
          <path d="M1 2h22v17h-7l-4 3-4-3H1z" fill="#9a3547" stroke="#f4e6e8" strokeWidth="1.4" />
        </svg>
        <StatusLabel>就绪</StatusLabel>
        <StatusRight>
          <StatusItem $gap={11} $mr={28}>
            <svg width="16" height="20" viewBox="0 0 16 20" fill="none" stroke="#fff" strokeWidth="1.4">
              <path d="M8 20V1M1 8l7-7 7 7" />
            </svg>
            添加到源代码管理
            <Tri c="#fff" up />
          </StatusItem>
          <StatusItem $gap={10} $mr={33}>
            <FaGitAlt size={22} color="#fff" />
            选择存储库
            <Tri c="#fff" up />
          </StatusItem>
          <BellBox>
            <svg width="24" height="24" viewBox="0 0 24 24" fill="#9a3547" stroke="#f4e6e8" strokeWidth="1.5">
              <path d="M5 18V10a7 7 0 0 1 14 0v8l2 2H3zM9 22h6" />
            </svg>
            <BellBadge>1</BellBadge>
          </BellBox>
        </StatusRight>
      </StatusBar>
      <Taskbar>
        <TaskIcons>
          <TaskCell>
            <svg width="36" height="36" viewBox="0 0 36 36">
              <defs>
                <linearGradient id="win" x1="0" y1="0" x2="1" y2="1">
                  <stop offset="0" stopColor="#52c6f8" />
                  <stop offset="1" stopColor="#0a76d0" />
                </linearGradient>
              </defs>
              <path d="M0 1h17.300v16.300H0zM18.700 1H36v16.300H18.700zM0 18.700h17.300V35H0zM18.700 18.700H36V35H18.700z" fill="url(#win)" />
            </svg>
          </TaskCell>
          <TaskCell>
            <svg width="34" height="36" viewBox="0 0 34 36" fill="none" stroke="#1a1a1a">
              <circle cx="20" cy="14" r="11" strokeWidth="3.500" />
              <path d="M13 24L4 34" strokeWidth="4" strokeLinecap="round" />
            </svg>
          </TaskCell>
          <TaskCell>
            <svg width="36" height="36" viewBox="0 0 36 36">
              <rect x="0" y="9" width="26" height="26" rx="2" fill="#2b2b2b" />
              <rect x="9" y="1" width="26" height="24" rx="2" fill="#f6f6f6" fillOpacity=".85" stroke="#ddd" />
              <rect x="9" y="9" width="17" height="16" fill="#a8a8a8" />
            </svg>
          </TaskCell>
          <TaskCell>
            <svg width="36" height="34" viewBox="0 0 36 34">
              <rect width="36" height="34" rx="2" fill="#0e5fa8" />
              <rect x="3" y="3" width="14" height="28" rx="1" fill="#fff" />
              <rect x="20" y="3" width="13" height="15" fill="#69d4ff" />
              <rect x="20" y="18" width="13" height="6" fill="#2ba2ee" />
              <rect x="20" y="24" width="13" height="7" fill="#0a7fe0" />
            </svg>
          </TaskCell>
          <TaskCell>
            <svg width="36" height="34" viewBox="0 0 36 34">
              <path d="M0 2a2 2 0 0 1 2-2h11l4 4h19v30H2a2 2 0 0 1-2-2z" fill="#e0a309" />
              <path d="M0 7h36v27H2a2 2 0 0 1-2-2z" fill="#fcd254" />
              <path d="M6 34v-9a3 3 0 0 1 3-3h18a3 3 0 0 1 3 3v9z" fill="#1779c9" />
              <path d="M11 28h14" stroke="#0d4f8a" strokeWidth="2" />
            </svg>
          </TaskCell>
          <TaskCell>
            <svg width="36" height="36" viewBox="0 0 36 36">
              <defs>
                <linearGradient id="edge" x1="0" y1="0" x2="1" y2=".7">
                  <stop offset="0" stopColor="#1b9de2" />
                  <stop offset=".6" stopColor="#34c6c0" />
                  <stop offset="1" stopColor="#7fe04e" />
                </linearGradient>
              </defs>
              <path d="M18 0c11 0 18 8 18 17 0 5-4 8-9 8-4 0-7-2-7-4 0-2 3-3 3-7 0-5-5-8-10-8C7 6 1 10 0 16 1 7 8 0 18 0z" fill="url(#edge)" />
              <path d="M0 16c0-6 6-10 13-10 5 0 10 3 10 8-3-3-9-3-12 1-3 5-1 14 7 20C8 37 0 28 0 16z" fill="#0f7fd0" />
              <path d="M11 15c3-4 9-4 12-1 0 4-3 5-3 7 0 2 3 4 7 4 3 0 5-1 7-2-3 8-10 13-16 11-8-6-10-15-7-19z" fill="#0c4f9e" />
            </svg>
          </TaskCell>
          <TaskCell $on>
            <VsMark s={36} c="#8a63c9" c2="#c79bf5" />
            <RunDot $active />
          </TaskCell>
          <TaskCell>
            <svg width="36" height="36" viewBox="0 0 36 36">
              <rect width="36" height="36" rx="6" fill="#5b8cff" />
              <path d="M10 30l2-13 10-10 6 8-9 13z" fill="#fff" fillOpacity=".95" />
            </svg>
            <RunDot />
          </TaskCell>
          <TaskCell>
            <svg width="32" height="32" viewBox="0 0 32 32">
              <rect width="32" height="32" fill="#8e8e8e" />
              <rect x="1" y="4" width="30" height="27" fill="#5a2d8c" />
              <path d="M5 10H3v5h2M7 15l3-5M12 15h4" stroke="#e8e8e8" strokeWidth="1.4" fill="none" />
            </svg>
            <RunDot />
          </TaskCell>
        </TaskIcons>
        <Tray>
          <TrayCell $w={34}>
            <svg width="20" height="12" viewBox="0 0 20 12" fill="none" stroke="#222" strokeWidth="1.4">
              <path d="M2 11l8-9 8 9" />
            </svg>
          </TrayCell>
          <TrayCell $w={36}>
            <svg width="26" height="18" viewBox="0 0 26 18">
              <path d="M6 17a5 5 0 0 1-1-10 8 8 0 0 1 15 0 5 5 0 0 1 0 10z" fill="#8a8a8a" stroke="#222" strokeWidth="1.4" />
            </svg>
          </TrayCell>
          <TrayCell $w={48}>英</TrayCell>
          <TrayCell $w={48}>
            <svg width="26" height="20" viewBox="0 0 26 20" fill="none" stroke="#bcbcbc" strokeWidth="1.5">
              <path d="M1 7c7-6 17-6 24 0M5 11c5-4 11-4 16 0" />
              <circle cx="13" cy="17" r="2" fill="#222" stroke="none" />
              <path d="M9 14c2-2 6-2 8 0" stroke="#222" />
            </svg>
          </TrayCell>
          <TrayCell $w={22}>
            <svg width="24" height="20" viewBox="0 0 24 20" fill="none" stroke="#222" strokeWidth="1.4">
              <path d="M1 7h4l6-5v16l-6-5H1zM15 7l7 7M22 7l-7 7" />
            </svg>
          </TrayCell>
          <TrayCell $w={50}>
            <svg width="26" height="16" viewBox="0 0 26 16">
              <rect x="1" y="1" width="21" height="14" rx="3" fill="none" stroke="#222" strokeWidth="1.4" />
              <rect x="3" y="3" width="17" height="10" fill="#222" />
              <rect x="23" y="5" width="3" height="6" fill="#222" />
            </svg>
          </TrayCell>
          <Clock>
            <span>10:25</span>
            <span>2022/9/1</span>
          </Clock>
          <Badge>5</Badge>
        </Tray>
        <Watermark>CSDN @你怎么睡得着的？？</Watermark>
      </Taskbar>
    </>
  );
}

export default function App() {
  return (
    <Page>
      <Global />
      <MenuBar />
      <MainToolbar />
      <DebugToolbar />
      <Workspace>
        <SolutionExplorer />
        <RightColumn>
          <WatchWindow />
          <Breakpoints />
        </RightColumn>
      </Workspace>
      <Taskbars />
    </Page>
  );
}
